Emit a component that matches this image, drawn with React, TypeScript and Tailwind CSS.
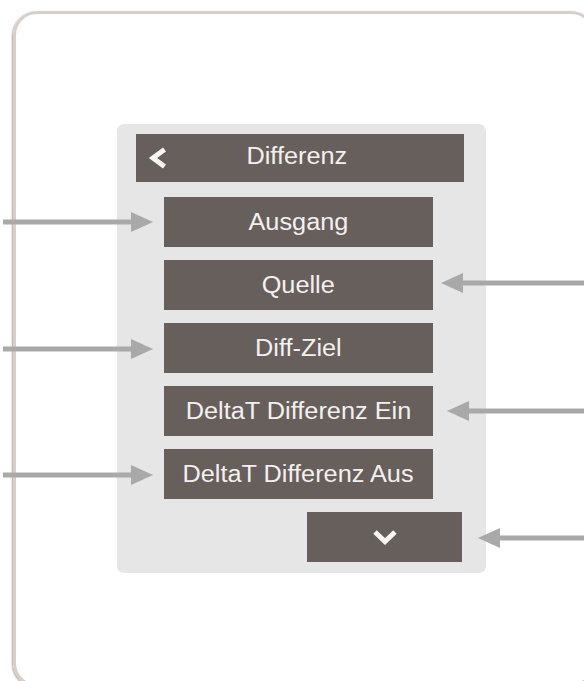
import React from "react";

const items = [
  "Ausgang",
  "Quelle",
  "Diff-Ziel",
  "DeltaT Differenz Ein",
  "DeltaT Differenz Aus",
];

function Label({ text }: { text: string }) {
  return (
    <span className="inline-block scale-x-[1.1] whitespace-pre text-[23px] leading-none text-[#f3f1f0]">
      {text}
    </span>
  );
}

function Arrows() {
  const color = "#a9a9a9";
  const left = [222, 349, 475];
  const right = [
    { y: 283, tip: 441 },
    { y: 411, tip: 447 },
    { y: 538, tip: 478 },
  ];
  return (
    <svg
      className="pointer-events-none absolute left-0 top-0"
      width={584}
      height={681}
      viewBox="0 0 584 681"
    >
      {left.map((y) => (
        <g key={`l${y}`} fill={color} stroke={color}>
          <line x1={3} y1={y} x2={134} y2={y} strokeWidth={5} />
          <polygon points={`131,${y - 10} 153,${y} 131,${y + 10}`} stroke="none" />
        </g>
      ))}
      {right.map((a) => (
        <g key={`r${a.y}`} fill={color} stroke={color}>
          <line x1={a.tip + 19} y1={a.y} x2={584} y2={a.y} strokeWidth={5} />
          <polygon
            points={`${a.tip},${a.y} ${a.tip + 22},${a.y - 10} ${a.tip + 22},${a.y + 10}`}
            stroke="none"
          />
        </g>
      ))}
    </svg>
  );
}

export default function App() {
  return (
    <div className="relative h-[681px] w-[584px] overflow-hidden bg-white font-['Liberation_Sans',Arial,sans-serif]">
      <div className="ml-[13px] mt-[11px] h-[676px] w-[582px] rounded-[24px] border-[3px] border-[#d8cfcb] pl-[101px] pt-[110px] shadow-[-1px_1px_2px_#b3a59f]">
        <div className="flex w-[369px] flex-col rounded-[7px] bg-[#e7e6e6] pb-[11px] pt-[10px]">
          <div className="ml-[19px] mr-[22px] grid h-[48px] grid-cols-[44px_1fr_44px] items-center bg-[#675f5b]">
            <svg width="20" height="24" viewBox="0 0 20 24" className="ml-[12px]">
              <polyline
                points="16.5,3.5 5,12 16.5,20.5"
                fill="none"
                stroke="#f7f6f5"
                strokeWidth={5}
                strokeLinejoin="miter"
              />
            </svg>
            <div className="pr-[6px] text-center">
              <Label text="Differenz" />
            </div>
            <div />
          </div>

          <div className="ml-[47px] mt-[15px] flex w-[269px] flex-col gap-[13px]">
            {items.map((t) => (
              <div
                key={t}
                className="flex h-[50px] items-center justify-center bg-[#675f5b]"
              >
                <Label text={t} />
              </div>
            ))}
          </div>

          <div className="ml-[190px] mt-[13px] flex h-[50px] w-[155px] items-center justify-center bg-[#675f5b]">
            <svg width="28" height="18" viewBox="0 0 28 18">
              <polyline
                points="4,4 14,13.5 24,4"
                fill="none"
                stroke="#f7f6f5"
                strokeWidth={5}
                strokeLinejoin="miter"
              />
            </svg>
          </div>
        </div>
      </div>
      <Arrows />
    </div>
  );
}
